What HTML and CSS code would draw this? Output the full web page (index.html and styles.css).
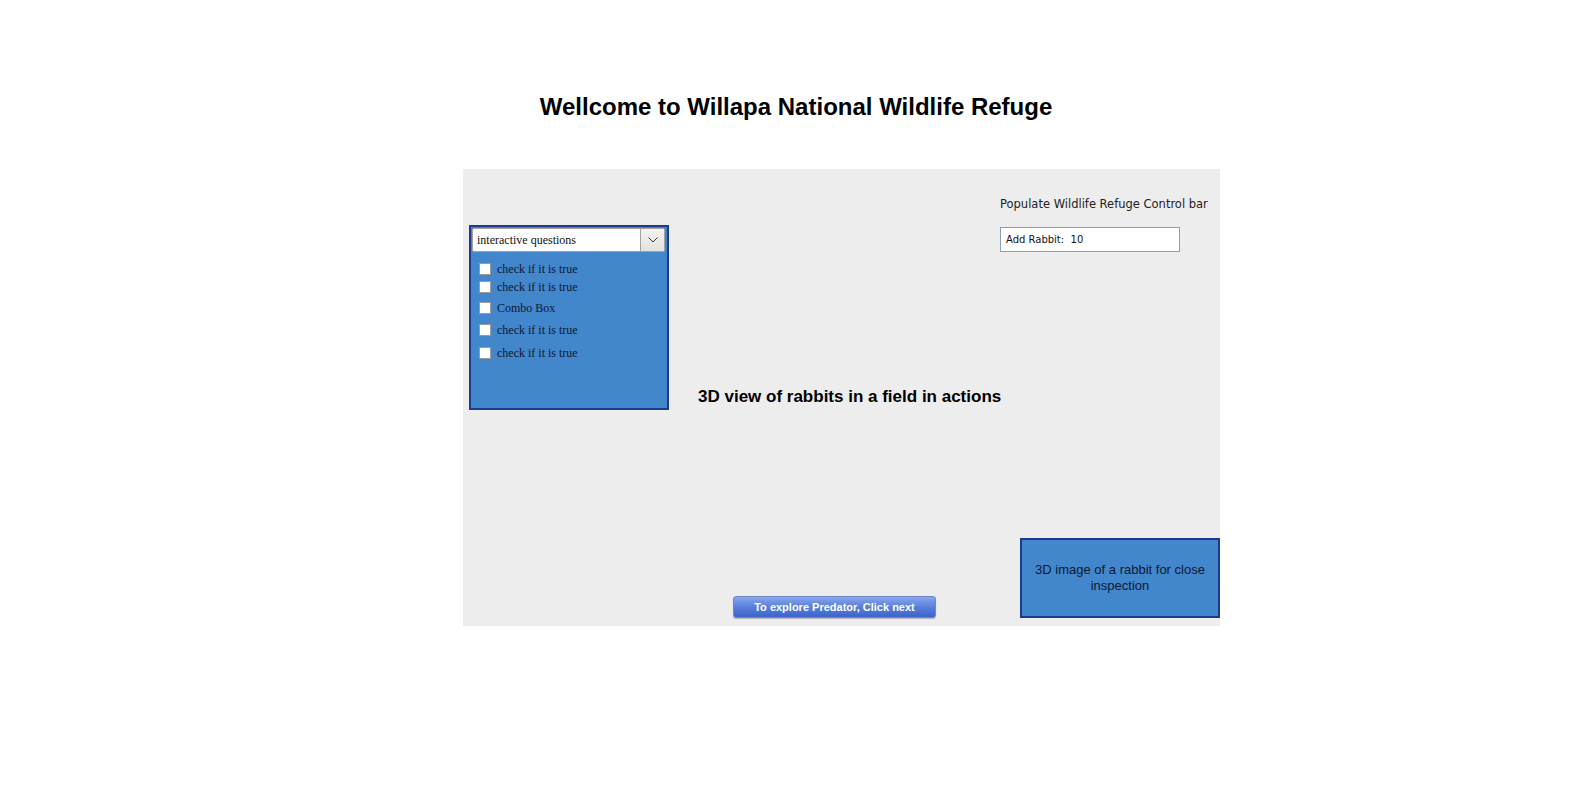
FILE: index.html
```html
<!DOCTYPE html>
<html>
<head>
<meta charset="utf-8">
<title>Willapa National Wildlife Refuge</title>
<link rel="stylesheet" href="styles.css">
</head>
<body>
<div class="page">
  <h1 class="title">Wellcome to Willapa National Wildlife Refuge</h1>
  <div class="panel">
    <div class="col-left">
      <div class="questions">
        <div class="select">
          <span class="select-text">interactive questions</span>
          <span class="select-btn">
            <svg width="10" height="6" viewBox="0 0 10 6"><path d="M0.5 0.5 L5 5 L9.5 0.5" fill="none" stroke="#333" stroke-width="1"/></svg>
          </span>
        </div>
        <ul class="checks">
          <li><span class="box"></span>check if it is true</li>
          <li><span class="box"></span>check if it is true</li>
          <li><span class="box"></span>Combo Box</li>
          <li><span class="box"></span>check if it is true</li>
          <li><span class="box"></span>check if it is true</li>
        </ul>
      </div>
    </div>
    <div class="col-mid">
      <div class="view-label">3D view of rabbits in a field in actions</div>
      <button class="next-btn">To explore Predator, Click next</button>
    </div>
    <div class="col-right">
      <div class="control-label">Populate Wildlife Refuge Control bar</div>
      <div class="field">Add Rabbit:&nbsp; 10</div>
      <div class="rabbit-box">3D image of a rabbit for close inspection</div>
    </div>
  </div>
</div>
</body>
</html>
```

FILE: styles.css
```css
html, body {
  margin: 0;
  padding: 0;
  background: #ffffff;
}

.page {
  margin-left: 463px;
  width: 757px;
}

.title {
  margin: 93px 0 0 0;
  width: 666px;
  text-align: center;
  font-family: "Liberation Sans", Arial, sans-serif;
  font-weight: bold;
  font-size: 24px;
  line-height: 28px;
  color: #000;
}

.panel {
  margin-top: 48px;
  width: 757px;
  height: 457px;
  background: #ededed;
  display: flex;
  padding-left: 6px;
  box-sizing: border-box;
}

.col-left {
  width: 200px;
  padding-top: 56px;
}

.questions {
  width: 200px;
  height: 185px;
  box-sizing: border-box;
  border: 2px solid #1c3a8e;
  background: #4286cc;
  padding: 1px;
}

.select {
  display: flex;
  height: 24px;
  width: 193px;
  box-sizing: border-box;
  background: #fff;
  border: 1px solid #a8a29a;
  border-radius: 2px;
}

.select-text {
  flex: 1;
  font-family: "Liberation Serif", "Times New Roman", serif;
  font-size: 12px;
  line-height: 22px;
  padding-left: 4px;
  color: #111;
}

.select-btn {
  width: 23px;
  border-left: 1px solid #a8a29a;
  background: linear-gradient(#f4f3f0, #e4e2dc);
  display: flex;
  align-items: center;
  justify-content: center;
}

.checks {
  list-style: none;
  margin: 0;
  padding: 0 0 0 7px;
}

.checks li {
  display: flex;
  align-items: center;
  height: 12px;
  font-family: "Liberation Serif", "Times New Roman", serif;
  font-size: 12px;
  color: #101830;
}

.checks li:nth-child(1) { margin-top: 11px; }
.checks li:nth-child(2) { margin-top: 6px; }
.checks li:nth-child(3) { margin-top: 9px; }
.checks li:nth-child(4) { margin-top: 10px; }
.checks li:nth-child(5) { margin-top: 11px; }

.box {
  width: 12px;
  height: 12px;
  box-sizing: border-box;
  background: #fff;
  border: 1px solid #9a9a9a;
  margin-right: 6px;
  flex: none;
}

.col-mid {
  width: 331px;
  display: flex;
  flex-direction: column;
}

.view-label {
  margin-top: 218px;
  margin-left: 29px;
  font-family: "Liberation Sans", Arial, sans-serif;
  font-weight: bold;
  font-size: 17px;
  line-height: 19px;
  color: #000;
  white-space: nowrap;
}

.next-btn {
  margin-top: auto;
  margin-bottom: 8px;
  margin-left: 64px;
  width: 203px;
  height: 22px;
  padding: 0;
  border: 1px solid #6d87c8;
  border-radius: 3px;
  background: linear-gradient(#87a6ec 0%, #5a7fdc 50%, #3c63cb 100%);
  color: #fff;
  font-family: "Liberation Sans", Arial, sans-serif;
  font-weight: bold;
  font-size: 11px;
  line-height: 20px;
  box-shadow: 0 1px 1px rgba(0,0,0,0.25);
}

.col-right {
  width: 220px;
  display: flex;
  flex-direction: column;
}

.control-label {
  margin-top: 27px;
  font-family: "DejaVu Sans", sans-serif;
  font-size: 11.5px;
  line-height: 16px;
  color: #222;
  white-space: nowrap;
}

.field {
  margin-top: 15px;
  width: 180px;
  height: 25px;
  box-sizing: border-box;
  background: #fff;
  border: 1px solid #8aa0b8;
  font-family: "DejaVu Sans", sans-serif;
  font-size: 10px;
  line-height: 23px;
  padding-left: 5px;
  color: #111;
}

.rabbit-box {
  margin-top: auto;
  margin-bottom: 8px;
  align-self: flex-end;
  width: 200px;
  height: 80px;
  box-sizing: border-box;
  border: 2px solid #1c3a8e;
  background: #4286cc;
  display: flex;
  align-items: center;
  justify-content: center;
  text-align: center;
  padding: 0 6px;
  font-family: "Liberation Sans", Arial, sans-serif;
  font-size: 13px;
  line-height: 16px;
  color: #101830;
}
```
